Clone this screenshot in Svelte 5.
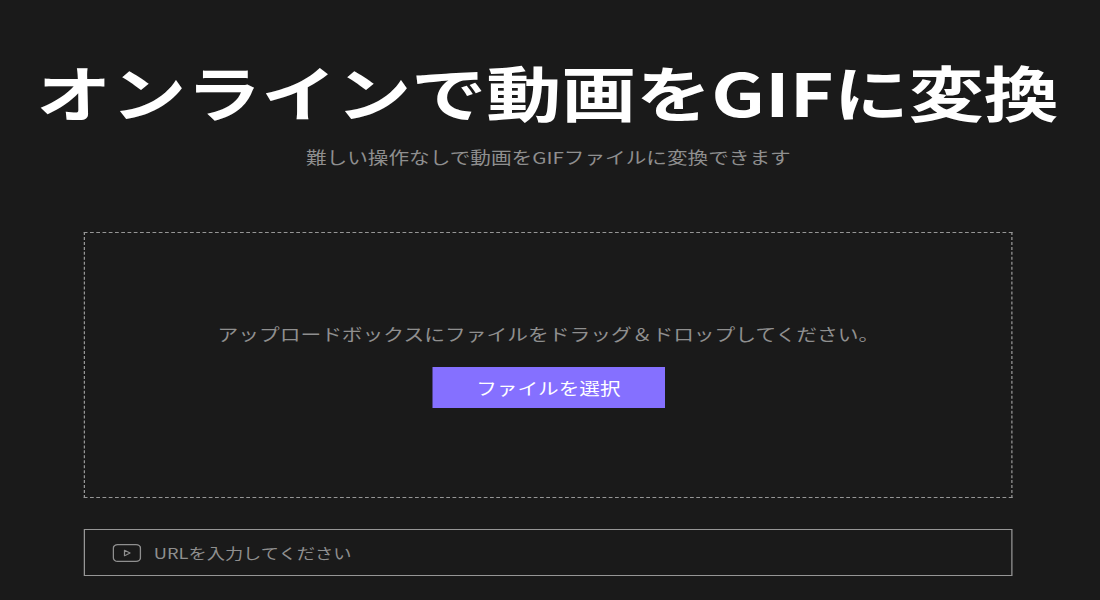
<script>
  let url = $state('');
</script>

<div class="page">
  <h1>オンラインで動画をGIFに変換</h1>
  <p class="sub">難しい操作なしで動画をGIFファイルに変換できます</p>

  <div class="drop">
    <p class="hint">アップロードボックスにファイルをドラッグ＆ドロップしてください。</p>
    <button class="pick" type="button">ファイルを選択</button>
  </div>

  <label class="url">
    <svg class="icon" viewBox="0 0 23 18" width="23" height="18" fill="none" stroke="currentColor" aria-hidden="true">
      <rect x="0.6" y="0.6" width="21.8" height="16.8" rx="3.6" stroke-width="1.2" />
      <path d="M9.6 6.2 L14 9 L9.6 11.8 Z" stroke-width="1" stroke-linejoin="round" />
    </svg>
    <input bind:value={url} placeholder="URLを入力してください" />
  </label>
</div>

<style>
  :global(html), :global(body) {
    background: #1a1a1a;
    overflow: hidden;
  }

  .page {
    width: 880px;
    height: 600px;
    box-sizing: border-box;
    padding: 46px 69.6px 0 67px;
    transform: scaleX(1.25);
    transform-origin: 0 0;
    font-family: "Noto Sans CJK JP", "DejaVu Sans", sans-serif;
    color: #fff;
    text-align: center;
  }

  h1 {
    margin: 0 -67.6px 0 -69px;
    font-size: 60px;
    line-height: 90px;
    font-weight: 700;
    white-space: nowrap;
  }

  .sub {
    margin: 10px 0 0;
    font-size: 16.5px;
    line-height: 22px;
    color: #8f8f8f;
  }

  .drop {
    margin-top: 64px;
    height: 266px;
    box-sizing: border-box;
    border: 1px dashed #969696;
    display: flex;
    flex-direction: column;
    align-items: center;
    justify-content: center;
    gap: 21px;
  }

  .hint {
    margin: 0;
    font-size: 16.6px;
    line-height: 24px;
    color: #8f8f8f;
    white-space: nowrap;
  }

  .pick {
    width: 186px;
    height: 41px;
    border: 0;
    padding: 0;
    background: #8570ff;
    color: #fff;
    font: inherit;
    font-size: 16.5px;
  }

  .url {
    margin-top: 31px;
    height: 47px;
    box-sizing: border-box;
    border: 1px solid #969696;
    padding-left: 22px;
    display: flex;
    align-items: center;
    gap: 10px;
    color: #8f8f8f;
  }

  .icon {
    flex: none;
  }

  input {
    flex: 1;
    border: 0;
    padding: 0;
    outline: 0;
    background: transparent;
    color: #8f8f8f;
    font: inherit;
    font-size: 14.6px;
  }

  input::placeholder {
    color: #8f8f8f;
    opacity: 1;
  }
</style>
